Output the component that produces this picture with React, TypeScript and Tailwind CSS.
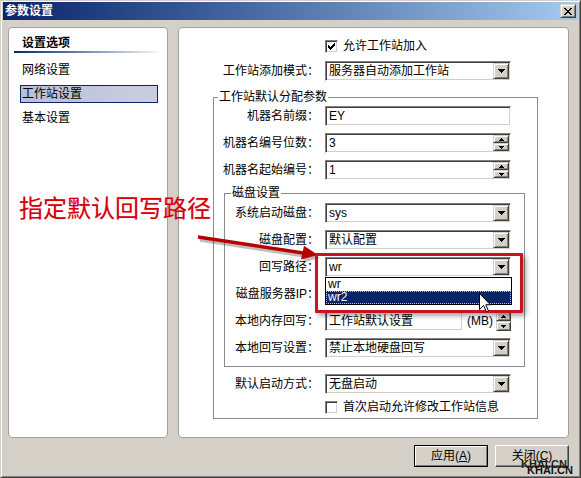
import React from "react";

const sunken =
  "bg-white border border-t-[#808080] border-l-[#808080] border-b-white border-r-white shadow-[inset_1px_1px_0_#404040,inset_-1px_-1px_0_#d4d0c8]";
const raised =
  "bg-[#d4d0c8] border border-t-[#d4d0c8] border-l-[#d4d0c8] border-b-[#404040] border-r-[#404040] shadow-[inset_1px_1px_0_#ffffff,inset_-1px_-1px_0_#808080]";

function DownArrow() {
  return (
    <svg width="7" height="4" viewBox="0 0 7 4" shapeRendering="crispEdges">
      <path d="M0 0h7v1H0z M1 1h5v1H1z M2 2h3v1H2z M3 3h1v1H3z" fill="#000" />
    </svg>
  );
}

function SmallArrow({ up }: { up?: boolean }) {
  return (
    <svg width="5" height="3" viewBox="0 0 5 3" shapeRendering="crispEdges">
      {up ? (
        <path d="M2 0h1v1H2z M1 1h3v1H1z M0 2h5v1H0z" fill="#000" />
      ) : (
        <path d="M0 0h5v1H0z M1 1h3v1H1z M2 2h1v1H2z" fill="#000" />
      )}
    </svg>
  );
}

function Select({ value }: { value: string }) {
  return (
    <div className={`${sunken} flex h-[20px] w-[186px] items-center p-[1px]`}>
      <span className="flex-1 pl-[2px] leading-[16px]">{value}</span>
      <span className={`${raised} flex h-[16px] w-[16px] items-center justify-center`}>
        <DownArrow />
      </span>
    </div>
  );
}

function Spinner({ tall }: { tall?: boolean }) {
  const half = tall ? "h-[10px]" : "h-[8px]";
  return (
    <span className={`flex flex-col ${tall ? "w-[15px]" : "w-[16px]"}`}>
      <span className={`${raised} ${half} flex items-center justify-center`}>
        <SmallArrow up />
      </span>
      <span className={`${raised} ${half} flex items-center justify-center`}>
        <SmallArrow />
      </span>
    </span>
  );
}

function TextBox({ value, spin, w }: { value: string; spin?: boolean; w: string }) {
  return (
    <div className={`${sunken} flex h-[20px] ${w} items-center p-[1px]`}>
      <span className="flex-1 pl-[2px] leading-[16px]">{value}</span>
      {spin && <Spinner />}
    </div>
  );
}

function Checkbox({ checked }: { checked?: boolean }) {
  return (
    <span className={`${sunken} flex h-[13px] w-[13px] shrink-0 items-center justify-center`}>
      {checked && (
        <svg width="7" height="7" viewBox="0 0 7 7" shapeRendering="crispEdges">
          <path
            d="M6 0h1v1H6z M5 1h2v1H5z M0 2h1v1H0z M4 2h3v1H4z M0 3h2v1H0z M3 3h3v1H3z M0 4h5v1H0z M1 5h3v1H1z M2 6h1v1H2z"
            fill="#000"
          />
        </svg>
      )}
    </span>
  );
}

function Row({ label, lw, children }: { label: string; lw: string; children: React.ReactNode }) {
  return (
    <div className="flex h-[20px] items-center">
      <span className={`${lw} shrink-0 pr-[6px] text-right leading-[14px]`}>{label}</span>
      {children}
    </div>
  );
}

export default function App() {
  return (
    <div className="relative h-[478px] w-[581px] overflow-hidden border border-t-[#d4d0c8] border-l-[#d4d0c8] border-b-[#404040] border-r-[#404040] bg-[#d4d0c8] px-[2px] pt-[1px] font-['Liberation_Sans','Noto_Sans_CJK_SC',sans-serif] text-[12px] text-black shadow-[inset_1px_1px_0_#ffffff,inset_-1px_-1px_0_#808080]">
      {/* title bar */}
      <div className="flex h-[18px] items-center bg-linear-to-r from-[#0a246a] to-[#a6caf0] px-[2px]">
        <span className="font-bold leading-[14px] text-white">参数设置</span>
        <span className={`${raised} ml-auto flex h-[14px] w-[16px] items-center justify-center`}>
          <svg width="8" height="7" viewBox="0 0 8 7" shapeRendering="crispEdges">
            <path
              d="M0 0h2v1H0z M6 0h2v1H6z M1 1h2v1H1z M5 1h2v1H5z M2 2h4v1H2z M3 3h2v1H3z M2 4h4v1H2z M1 5h2v1H1z M5 5h2v1H5z M0 6h2v1H0z M6 6h2v1H6z"
              fill="#000"
            />
          </svg>
        </span>
      </div>

      <div className="ml-[5px] mt-[7px] flex h-[411px] gap-[10px]">
        {/* left panel */}
        <div className="w-[160px] rounded-[4px] border border-[#a0a0a0] bg-white">
          <div className="ml-[13px] mt-[8px] font-bold leading-[14px]">设置选项</div>
          <div className="ml-[5px] mt-[1px] h-[2px] w-[150px] bg-linear-to-r from-[#0a246a] to-white" />
          <div className="mt-[8px] flex flex-col gap-[6px]">
            <div className="ml-[11px] h-[18px] w-[138px] border border-transparent pl-[1px] leading-[16px]">网络设置</div>
            <div className="ml-[11px] h-[18px] w-[138px] border border-[#0a246a] bg-linear-to-r from-[#b9c0d6] to-[#c9cede] pl-[1px] leading-[16px]">
              工作站设置
            </div>
            <div className="ml-[11px] h-[18px] w-[138px] border border-transparent pl-[1px] leading-[16px]">基本设置</div>
          </div>
        </div>

        {/* right panel */}
        <div className="w-[391px] rounded-[4px] border border-[#a0a0a0] bg-white">
          <div className="mt-[12px] flex items-center pl-[146px]">
            <Checkbox checked />
            <span className="ml-[5px] leading-[13px]">允许工作站加入</span>
          </div>
          <div className="mt-[8px]">
            <Row lw="w-[146px]" label="工作站添加模式：">
              <Select value="服务器自动添加工作站" />
            </Row>
          </div>

          <fieldset className="ml-[34px] mt-[9px] w-[325px] border border-[#8c8c8c] pb-[4px]">
            <legend className="ml-[4px] px-[1px] leading-[14px]">工作站默认分配参数</legend>
            <div className="mt-[2px]">
              <Row lw="w-[111px]" label="机器名前缀：">
                <TextBox w="w-[186px]" value="EY" />
              </Row>
            </div>
            <div className="mt-[7px]">
              <Row lw="w-[111px]" label="机器名编号位数：">
                <TextBox w="w-[186px]" value="3" spin />
              </Row>
            </div>
            <div className="mt-[7px]">
              <Row lw="w-[111px]" label="机器名起始编号：">
                <TextBox w="w-[186px]" value="1" spin />
              </Row>
            </div>

            <fieldset className="ml-[10px] mt-[6px] w-[301px] border border-[#8c8c8c] pb-[8px]">
              <legend className="ml-[6px] px-[1px] leading-[14px]">磁盘设置</legend>
              <div className="mt-[3px] flex flex-col gap-[7px]">
                <Row lw="w-[100px]" label="系统启动磁盘：">
                  <Select value="sys" />
                </Row>
                <Row lw="w-[100px]" label="磁盘配置：">
                  <Select value="默认配置" />
                </Row>
                <Row lw="w-[100px]" label="回写路径：">
                  <Select value="wr" />
                </Row>
                <Row lw="w-[100px]" label="磁盘服务器IP：">
                  <TextBox w="w-[186px]" value="" />
                </Row>
                <Row lw="w-[100px]" label="本地内存回写：">
                  <div className="flex h-[20px] w-[186px] items-center">
                    <TextBox w="w-[138px]" value="工作站默认设置" />
                    <span className="flex-1 pr-[3px] text-right">(MB)</span>
                    <Spinner tall />
                  </div>
                </Row>
                <Row lw="w-[100px]" label="本地回写设置：">
                  <Select value="禁止本地硬盘回写" />
                </Row>
              </div>
            </fieldset>

            <div className="mt-[7px]">
              <Row lw="w-[111px]" label="默认启动方式：">
                <Select value="无盘启动" />
              </Row>
            </div>
            <div className="mt-[7px] flex items-center pl-[111px]">
              <Checkbox />
              <span className="ml-[5px] leading-[13px]">首次启动允许修改工作站信息</span>
            </div>
          </fieldset>
        </div>
      </div>

      {/* buttons */}
      <div className="mt-[7px] flex justify-end gap-[7px] pr-[9px]">
        <button className="h-[22px] w-[74px] border border-black">
          <span className="flex h-full w-full items-center justify-center border border-t-white border-l-white border-b-[#808080] border-r-[#808080]">
            应用(<u>A</u>)
          </span>
        </button>
        <button className="flex h-[22px] w-[74px] items-center justify-center border border-t-white border-l-white border-b-[#404040] border-r-[#404040] shadow-[inset_-1px_-1px_0_#808080]">
          关闭(<u>C</u>)
        </button>
      </div>

      {/* annotation overlay */}
      <div className="absolute left-[18px] top-[196px] text-[24px] leading-[24px] text-[#d40000] [text-shadow:0_0_1px_#ff9ecf]">
        指定默认回写路径
      </div>
      <svg className="absolute left-[189px] top-[227px]" width="136" height="40" viewBox="0 0 136 40">
        <g fill="#000" stroke="#000" opacity="0.25" transform="translate(2 3)">
          <line x1="8" y1="9" x2="113" y2="25" strokeWidth="3.5" />
          <path d="M128 27 L111 31.5 L114 17.7 Z" stroke="none" />
        </g>
        <line x1="8" y1="9" x2="113" y2="25" stroke="#b80000" strokeWidth="3.5" />
        <path d="M128 27 L111 31.5 L114 17.7 Z" fill="#b80000" />
      </svg>

      <div className="absolute left-[314px] top-[252px] h-[60px] w-[208px] rounded-[1px] border-[3px] border-[#c8141e] shadow-[3px_3px_5px_rgba(0,0,0,0.35)]" />

      <div className="absolute left-[324px] top-[276px] w-[187px] border border-black bg-white">
        <div className="h-[13px] pl-[2px] leading-[13px]">wr</div>
        <div className="h-[13px] border border-dotted border-[#c8c8a0] bg-[#0a246a] pl-[1px] leading-[11px] text-white">wr2</div>
      </div>

      <svg className="absolute left-[478px] top-[292px]" width="12" height="20" viewBox="0 0 12 20">
        <path d="M0.5 0.5 L0.5 16.5 L4.5 12.5 L7.5 19 L9.5 18 L6.8 11.8 L11.5 11.8 Z" fill="#fff" stroke="#000" strokeWidth="1" />
      </svg>

      <div className="absolute left-[520px] top-[457px] text-[11px] font-bold leading-[12px] text-[#222]">KHAI.CN</div>
      <div className="absolute left-[526px] top-[463px] text-[11px] font-bold leading-[12px] text-[#111]">KHAI.CN</div>
    </div>
  );
}
